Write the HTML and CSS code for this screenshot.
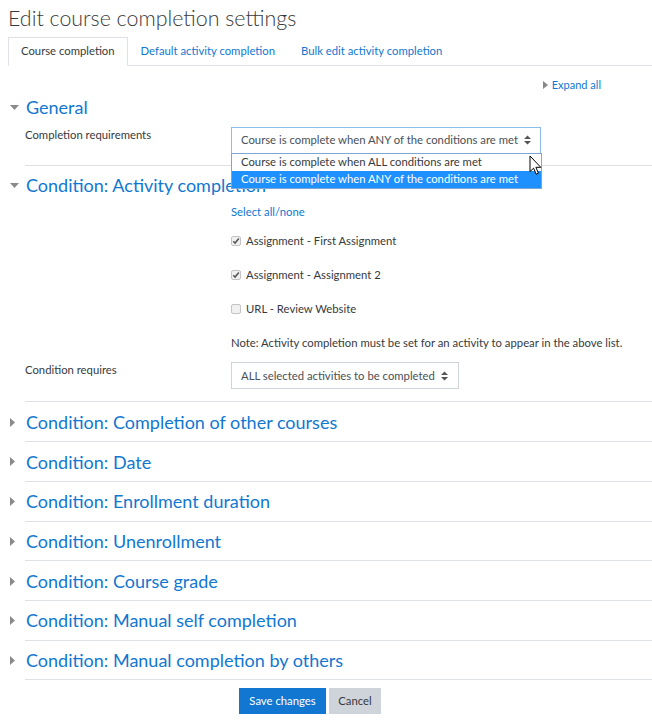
FILE: index.html
```html
<!DOCTYPE html>
<html>
<head>
<meta charset="utf-8">
<title>Edit course completion settings</title>
<link rel="stylesheet" href="styles.css">
</head>
<body>
<div class="page">
  <h2 class="title">Edit course completion settings</h2>
  <ul class="tabs">
    <li class="tab active"><span class="tab-link">Course completion</span></li>
    <li class="tab"><a class="tab-link" href="#">Default activity completion</a></li>
    <li class="tab"><a class="tab-link" href="#">Bulk edit activity completion</a></li>
  </ul>

  <div class="expand-row">
    <a class="expand" href="#"><svg class="expand-caret" width="5" height="8" viewBox="0 0 5 8"><path d="M0 0 L5 4 L0 8 Z" fill="#888"/></svg>Expand all</a>
  </div>

  <div class="section">
    <div class="sec-head first">
      <span class="caret"><svg width="9" height="5" viewBox="0 0 9 5"><path d="M0 0 L9 0 L4.5 5 Z" fill="#8a8a8a"/></svg></span>
      <span class="sec-title">General</span>
    </div>
    <div class="frow select-row">
      <div class="flabel">Completion requirements</div>
      <div class="fctrl">
        <div class="select focus wide">
          <span class="sel-text">Course is complete when ANY of the conditions are met</span>
          <svg class="arrows" width="7" height="10" viewBox="0 0 7 10"><path d="M0 4 L3.5 0.5 L7 4 Z M0 6 L3.5 9.5 L7 6 Z" fill="#555"/></svg>
        </div>
        <div class="dropdown">
          <div class="opt">Course is complete when ALL conditions are met</div>
          <div class="opt selected">Course is complete when ANY of the conditions are met</div>
        </div>
        <svg class="cursor" width="13" height="21" viewBox="0 0 13 21"><path d="M1 1 L1 16.5 L4.6 13.2 L7.2 19.2 L9.4 18.2 L6.9 12.3 L11.8 12.3 Z" fill="#fff" stroke="#000" stroke-width="1" stroke-linejoin="miter"/></svg>
      </div>
    </div>
  </div>

  <div class="section">
    <div class="sec-head">
      <span class="caret"><svg width="9" height="5" viewBox="0 0 9 5"><path d="M0 0 L9 0 L4.5 5 Z" fill="#8a8a8a"/></svg></span>
      <span class="sec-title">Condition: Activity completion</span>
    </div>
    <div class="frow line first-line">
      <div class="flabel"></div>
      <div class="fctrl"><a class="link" href="#">Select all/none</a></div>
    </div>
    <div class="frow line">
      <div class="flabel"></div>
      <div class="fctrl check">
        <svg class="cb" width="10" height="10" viewBox="0 0 10 10"><rect x="0.5" y="0.5" width="9" height="9" rx="1.5" fill="#f0f0f0" stroke="#c4c4c4"/><path d="M2.3 5.2 L4.1 7.1 L7.8 2.6" fill="none" stroke="#555" stroke-width="1.5"/></svg>
        <span>Assignment - First Assignment</span>
      </div>
    </div>
    <div class="frow line">
      <div class="flabel"></div>
      <div class="fctrl check">
        <svg class="cb" width="10" height="10" viewBox="0 0 10 10"><rect x="0.5" y="0.5" width="9" height="9" rx="1.5" fill="#f0f0f0" stroke="#c4c4c4"/><path d="M2.3 5.2 L4.1 7.1 L7.8 2.6" fill="none" stroke="#555" stroke-width="1.5"/></svg>
        <span>Assignment - Assignment 2</span>
      </div>
    </div>
    <div class="frow line">
      <div class="flabel"></div>
      <div class="fctrl check">
        <svg class="cb" width="10" height="10" viewBox="0 0 10 10"><rect x="0.5" y="0.5" width="9" height="9" rx="1.5" fill="#f0f0f0" stroke="#c4c4c4"/></svg>
        <span>URL - Review Website</span>
      </div>
    </div>
    <div class="frow line note-line">
      <div class="flabel"></div>
      <div class="fctrl">Note: Activity completion must be set for an activity to appear in the above list.</div>
    </div>
    <div class="frow select-row last-select">
      <div class="flabel">Condition requires</div>
      <div class="fctrl">
        <div class="select narrow">
          <span class="sel-text">ALL selected activities to be completed</span>
          <svg class="arrows" width="7" height="10" viewBox="0 0 7 10"><path d="M0 4 L3.5 0.5 L7 4 Z M0 6 L3.5 9.5 L7 6 Z" fill="#555"/></svg>
        </div>
      </div>
    </div>
  </div>

  <div class="section collapsed"><div class="sec-head"><span class="caret"><svg width="5" height="9" viewBox="0 0 5 9"><path d="M0 0 L5 4.5 L0 9 Z" fill="#8a8a8a"/></svg></span><span class="sec-title">Condition: Completion of other courses</span></div></div>
  <div class="section collapsed"><div class="sec-head"><span class="caret"><svg width="5" height="9" viewBox="0 0 5 9"><path d="M0 0 L5 4.5 L0 9 Z" fill="#8a8a8a"/></svg></span><span class="sec-title">Condition: Date</span></div></div>
  <div class="section collapsed"><div class="sec-head"><span class="caret"><svg width="5" height="9" viewBox="0 0 5 9"><path d="M0 0 L5 4.5 L0 9 Z" fill="#8a8a8a"/></svg></span><span class="sec-title">Condition: Enrollment duration</span></div></div>
  <div class="section collapsed"><div class="sec-head"><span class="caret"><svg width="5" height="9" viewBox="0 0 5 9"><path d="M0 0 L5 4.5 L0 9 Z" fill="#8a8a8a"/></svg></span><span class="sec-title">Condition: Unenrollment</span></div></div>
  <div class="section collapsed"><div class="sec-head"><span class="caret"><svg width="5" height="9" viewBox="0 0 5 9"><path d="M0 0 L5 4.5 L0 9 Z" fill="#8a8a8a"/></svg></span><span class="sec-title">Condition: Course grade</span></div></div>
  <div class="section collapsed"><div class="sec-head"><span class="caret"><svg width="5" height="9" viewBox="0 0 5 9"><path d="M0 0 L5 4.5 L0 9 Z" fill="#8a8a8a"/></svg></span><span class="sec-title">Condition: Manual self completion</span></div></div>
  <div class="section collapsed"><div class="sec-head"><span class="caret"><svg width="5" height="9" viewBox="0 0 5 9"><path d="M0 0 L5 4.5 L0 9 Z" fill="#8a8a8a"/></svg></span><span class="sec-title">Condition: Manual completion by others</span></div></div>

  <div class="buttons">
    <button class="btn primary">Save changes</button>
    <button class="btn secondary">Cancel</button>
  </div>
</div>
</body>
</html>
```
FILE: styles.css
```css
* { box-sizing: border-box; }
html, body { margin: 0; padding: 0; background: #fff; }
body {
  font-family: "Lato", "Open Sans", sans-serif;
  font-size: 11.3px;
  color: #373a3c;
}
a { color: #1177d1; text-decoration: none; }

.page { padding-left: 8px; }

.title {
  margin: 0;
  padding-top: 4px;
  font-size: 21.4px;
  line-height: 28px;
  font-weight: 300;
  color: #373a3c;
  white-space: nowrap;
}

.tabs {
  list-style: none;
  margin: 5px 0 0 0;
  padding: 0;
  display: flex;
  border-bottom: 1px solid #dee2e6;
}
.tab-link {
  display: block;
  padding: 4px 12px 5px;
  line-height: 18px;
  border: 1px solid transparent;
  margin-bottom: -1px;
  font-size: 11.3px;
  white-space: nowrap;
}
.tab.active .tab-link {
  border-color: #dee2e6 #dee2e6 #fff;
  background: #fff;
  color: #373a3c;
}

.expand-row {
  margin-top: 10px;
  height: 18px;
  line-height: 18px;
  display: flex;
  justify-content: flex-end;
  padding-right: 51px;
}
.expand { display: flex; align-items: center; font-size: 11px; }
.expand-caret { margin-right: 4px; }

.section {
  margin-left: 17px;
  border-bottom: 1px solid #dee2e6;
  position: relative;
}
.sec-head {
  margin-left: -17px;
  display: flex;
  align-items: center;
  padding: 8px 0;
  line-height: 22.7px;
}
.section.collapsed .sec-head { padding: 8.5px 0 7.5px; }
.sec-head.first { padding-top: 2px; }
.caret {
  width: 18px;
  padding-left: 2px;
  display: flex;
  align-items: center;
}
.sec-title {
  font-size: 18px;
  color: #1177d1;
  white-space: nowrap;
}

.frow { display: flex; align-items: flex-start; }
.flabel { width: 206px; flex: none; line-height: 18px; white-space: nowrap; }
.fctrl { position: relative; line-height: 18px; white-space: nowrap; }
.select-row { margin-bottom: 11px; }
.select-row.last-select { margin-bottom: 12px; }
.select-row .flabel { margin-top: -1px; }
.line { height: 18px; margin-bottom: 16px; }
.first-line { margin-top: -1px; margin-bottom: 11px; }
.note-line { margin-bottom: 10px; }

.check { display: flex; align-items: center; }
.cb { margin-right: 5px; }

.select {
  height: 27px;
  border: 1px solid #ced4da;
  display: flex;
  align-items: center;
  justify-content: space-between;
  padding: 0 10px 0 9px;
  color: #495057;
  background: #fff;
}
.sel-text { white-space: nowrap; }
.select.focus { border-color: #8fbde9; }
.select.wide { width: 310px; }
.select.narrow { width: 228px; }
.arrows { margin-left: 6px; flex: none; }

.dropdown {
  position: absolute;
  left: 0;
  top: 26px;
  width: 311px;
  border: 1px solid #7ea6d3;
  background: #fff;
  z-index: 5;
}
.opt {
  height: 17px;
  line-height: 16px;
  padding-left: 9px;
  color: #373a3c;
  white-space: nowrap;
}
.opt.selected { background: #1e90ff; color: #fff; }
.cursor { position: absolute; left: 298px; top: 28px; z-index: 6; }

.buttons {
  display: flex;
  gap: 3px;
  margin-top: 8px;
  margin-left: 231px;
}
.btn {
  font-family: inherit;
  font-size: 11.3px;
  height: 26px;
  border: none;
  padding: 0;
  line-height: 26px;
  white-space: nowrap;
  text-align: center;
}
.btn.primary { background: #1177d1; color: #fff; width: 87px; }
.btn.secondary { background: #ced4da; color: #373a3c; width: 52px; }
```
